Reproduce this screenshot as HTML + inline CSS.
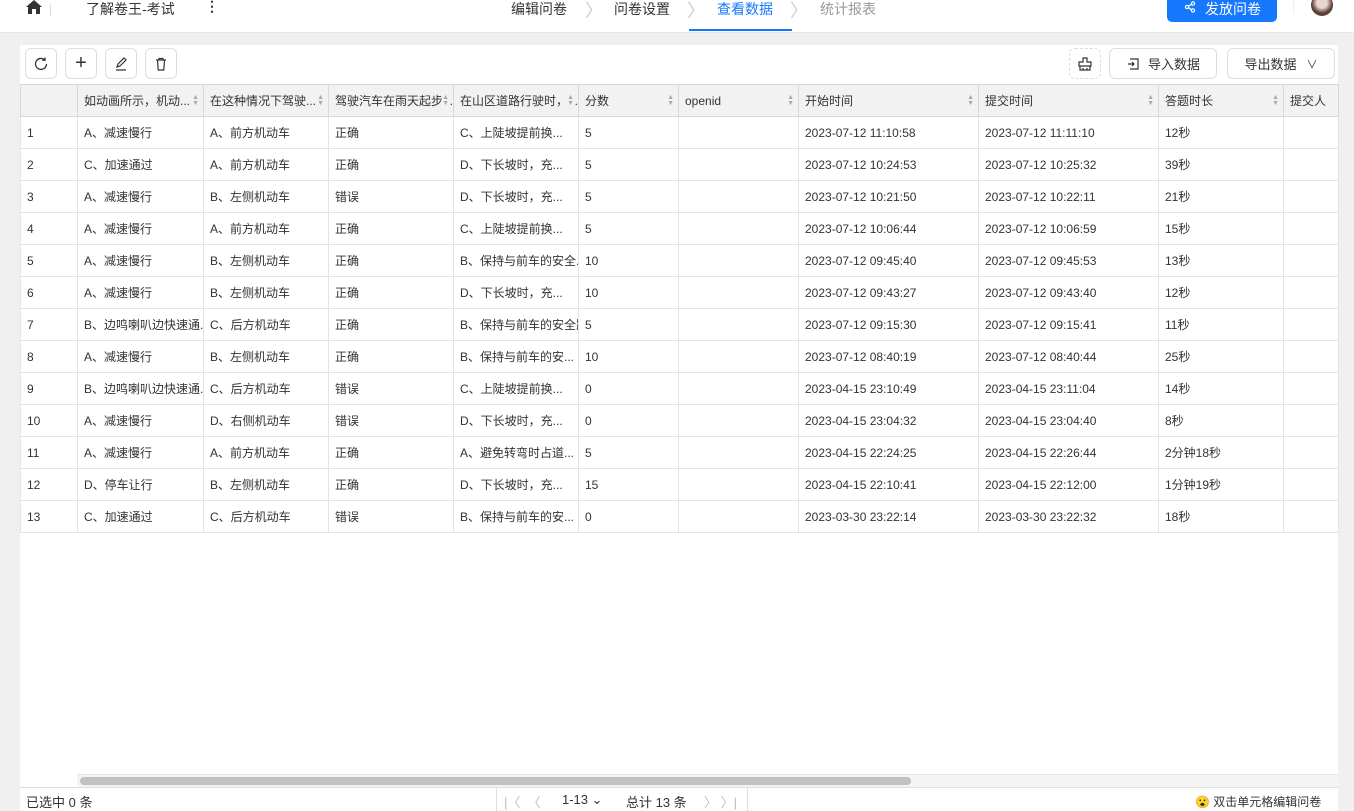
<!DOCTYPE html><html><head><meta charset="utf-8"><style>
*{box-sizing:border-box;margin:0;padding:0}
body{width:1354px;height:811px;overflow:hidden;background:#f0f0f0;font-family:"Liberation Sans","Noto Sans CJK SC",sans-serif;position:relative;color:#333}
.top{position:absolute;left:0;top:0;width:1354px;height:32px;background:#fff;font-size:14px}
.a{position:absolute}
.card{position:absolute;left:20px;top:45px;width:1318px;height:766px;background:#fff}
.btn{position:absolute;top:3px;height:31px;border:1px solid #ddd;border-radius:6px;background:#fff;font-size:13px;display:flex;align-items:center;justify-content:center;color:#333}
table{position:absolute;left:0;top:39px;width:1318px;border-collapse:collapse;font-size:12px;table-layout:fixed}
td,th{height:32px;border:1px solid #e4e4e4;padding:0 6px;white-space:nowrap;overflow:hidden;text-align:left;font-weight:normal;color:#333}
th{background:#f2f2f2;border-color:#d8d8d8;position:relative;padding-right:4px}
th .s{position:absolute;right:4px;top:10px;font-size:7px;color:#aaa;line-height:6px;background:#f2f2f2}
</style></head><body>
<div class="top">
<svg class="a" style="left:26px;top:0" width="16" height="14" viewBox="0 0 16 14"><path d="M8 0L0 7h2v7h4V9h4v5h4V7h2z" fill="#333"/></svg>
<div class="a" style="left:50px;top:4px;width:1px;height:12px;background:#ddd"></div>
<div class="a" style="left:86px;top:-1px">了解卷王-考试</div>
<div class="a" style="left:205px;top:-2px;font-weight:bold">⋮</div>
<div class="a" style="left:511px;top:-1px">编辑问卷</div>
<div class="a" style="left:585px;top:-3px;color:#ccc;font-size:18px">〉</div>
<div class="a" style="left:614px;top:-1px">问卷设置</div>
<div class="a" style="left:687px;top:-3px;color:#ccc;font-size:18px">〉</div>
<div class="a" style="left:717px;top:-1px;color:#1677ff">查看数据</div>
<div class="a" style="left:689px;top:29px;width:103px;height:2px;background:#1677ff"></div>
<div class="a" style="left:790px;top:-3px;color:#ccc;font-size:18px">〉</div>
<div class="a" style="left:820px;top:-1px;color:#999">统计报表</div>
<div class="a" style="left:1167px;top:-4px;width:110px;height:26px;background:#1677ff;border-radius:5px"></div>
<div class="a" style="left:1205px;top:-1px;color:#fff;font-size:14px;white-space:nowrap">发放问卷</div>
<svg class="a" style="left:1184px;top:1px" width="12" height="12" viewBox="0 0 12 12" fill="none" stroke="#fff" stroke-width="1.2"><circle cx="3" cy="6" r="1.6"/><circle cx="9" cy="2.5" r="1.6"/><circle cx="9" cy="9.5" r="1.6"/><path d="M4.4 5.2L7.6 3.3M4.4 6.8L7.6 8.7"/></svg>
<div class="a" style="left:1293px;top:0;width:1px;height:14px;background:#eee"></div>
<div class="a" style="left:1311px;top:-6px;width:22px;height:22px;border-radius:50%;background:radial-gradient(circle at 50% 40%,#e9d6cc 30%,#5a4038 60%)"></div>
</div>
<div class="a" style="left:0;top:32px;width:1354px;height:1px;background:#e6e6e6"></div>
<div class="card">
<div class="btn" style="left:5px;width:32px"><svg width="16" height="16" viewBox="0 0 16 16" fill="none" stroke="#333" stroke-width="1.3"><path d="M13.5 8A5.5 5.5 0 1 1 11.5 3.7M12 1.5v2.7H9.3"/></svg></div>
<div class="btn" style="left:45px;width:32px;font-size:20px;font-weight:300">+</div>
<div class="btn" style="left:85px;width:32px"><svg width="16" height="16" viewBox="0 0 16 16" fill="none" stroke="#333" stroke-width="1.2"><path d="M4 11l1-3 6-6 2 2-6 6zM3 14h10"/></svg></div>
<div class="btn" style="left:125px;width:32px"><svg width="16" height="16" viewBox="0 0 16 16" fill="none" stroke="#333" stroke-width="1.2"><path d="M3 4h10M6 4V2.5h4V4M4.5 4l.7 10h5.6l.7-10"/></svg></div>
<div class="btn" style="left:1049px;width:32px;border-style:dashed"><svg width="16" height="16" viewBox="0 0 16 16" fill="none" stroke="#333" stroke-width="1.2"><path d="M6 2h4v4h4v4H2V6h4zM3 10v4h10v-4M6 12v2M10 12v2"/></svg></div>
<div class="btn" style="left:1089px;width:108px"><svg width="14" height="14" viewBox="0 0 14 14" fill="none" stroke="#333" stroke-width="1.2" style="margin-right:8px"><path d="M4 2h8v10H4M2 7h6M6 5l2 2-2 2"/></svg>导入数据</div>
<div class="btn" style="left:1207px;width:108px">导出数据 <span style="margin-left:10px;font-size:11px">∨</span></div>
<table>
<colgroup><col style="width:57px"><col style="width:126px"><col style="width:125px"><col style="width:125px"><col style="width:125px"><col style="width:100px"><col style="width:120px"><col style="width:180px"><col style="width:180px"><col style="width:125px"><col style="width:55px"></colgroup>
<tr><th></th><th>如动画所示，机动...<span class="s">▲<br>▼</span></th><th>在这种情况下驾驶...<span class="s">▲<br>▼</span></th><th>驾驶汽车在雨天起步...<span class="s">▲<br>▼</span></th><th>在山区道路行驶时，...<span class="s">▲<br>▼</span></th><th>分数<span class="s">▲<br>▼</span></th><th>openid<span class="s">▲<br>▼</span></th><th>开始时间<span class="s">▲<br>▼</span></th><th>提交时间<span class="s">▲<br>▼</span></th><th>答题时长<span class="s">▲<br>▼</span></th><th>提交人</th></tr>
<tr><td>1</td><td>A、减速慢行</td><td>A、前方机动车</td><td>正确</td><td>C、上陡坡提前换...</td><td>5</td><td></td><td>2023-07-12 11:10:58</td><td>2023-07-12 11:11:10</td><td>12秒</td><td></td></tr>
<tr><td>2</td><td>C、加速通过</td><td>A、前方机动车</td><td>正确</td><td>D、下长坡时，充...</td><td>5</td><td></td><td>2023-07-12 10:24:53</td><td>2023-07-12 10:25:32</td><td>39秒</td><td></td></tr>
<tr><td>3</td><td>A、减速慢行</td><td>B、左侧机动车</td><td>错误</td><td>D、下长坡时，充...</td><td>5</td><td></td><td>2023-07-12 10:21:50</td><td>2023-07-12 10:22:11</td><td>21秒</td><td></td></tr>
<tr><td>4</td><td>A、减速慢行</td><td>A、前方机动车</td><td>正确</td><td>C、上陡坡提前换...</td><td>5</td><td></td><td>2023-07-12 10:06:44</td><td>2023-07-12 10:06:59</td><td>15秒</td><td></td></tr>
<tr><td>5</td><td>A、减速慢行</td><td>B、左侧机动车</td><td>正确</td><td>B、保持与前车的安全...</td><td>10</td><td></td><td>2023-07-12 09:45:40</td><td>2023-07-12 09:45:53</td><td>13秒</td><td></td></tr>
<tr><td>6</td><td>A、减速慢行</td><td>B、左侧机动车</td><td>正确</td><td>D、下长坡时，充...</td><td>10</td><td></td><td>2023-07-12 09:43:27</td><td>2023-07-12 09:43:40</td><td>12秒</td><td></td></tr>
<tr><td>7</td><td>B、边鸣喇叭边快速通...</td><td>C、后方机动车</td><td>正确</td><td>B、保持与前车的安全距</td><td>5</td><td></td><td>2023-07-12 09:15:30</td><td>2023-07-12 09:15:41</td><td>11秒</td><td></td></tr>
<tr><td>8</td><td>A、减速慢行</td><td>B、左侧机动车</td><td>正确</td><td>B、保持与前车的安...</td><td>10</td><td></td><td>2023-07-12 08:40:19</td><td>2023-07-12 08:40:44</td><td>25秒</td><td></td></tr>
<tr><td>9</td><td>B、边鸣喇叭边快速通...</td><td>C、后方机动车</td><td>错误</td><td>C、上陡坡提前换...</td><td>0</td><td></td><td>2023-04-15 23:10:49</td><td>2023-04-15 23:11:04</td><td>14秒</td><td></td></tr>
<tr><td>10</td><td>A、减速慢行</td><td>D、右侧机动车</td><td>错误</td><td>D、下长坡时，充...</td><td>0</td><td></td><td>2023-04-15 23:04:32</td><td>2023-04-15 23:04:40</td><td>8秒</td><td></td></tr>
<tr><td>11</td><td>A、减速慢行</td><td>A、前方机动车</td><td>正确</td><td>A、避免转弯时占道...</td><td>5</td><td></td><td>2023-04-15 22:24:25</td><td>2023-04-15 22:26:44</td><td>2分钟18秒</td><td></td></tr>
<tr><td>12</td><td>D、停车让行</td><td>B、左侧机动车</td><td>正确</td><td>D、下长坡时，充...</td><td>15</td><td></td><td>2023-04-15 22:10:41</td><td>2023-04-15 22:12:00</td><td>1分钟19秒</td><td></td></tr>
<tr><td>13</td><td>C、加速通过</td><td>C、后方机动车</td><td>错误</td><td>B、保持与前车的安...</td><td>0</td><td></td><td>2023-03-30 23:22:14</td><td>2023-03-30 23:22:32</td><td>18秒</td><td></td></tr>
</table>
<div class="a" style="left:57px;top:729px;width:1261px;height:13px;background:#f4f4f4;border-top:1px solid #e6e6e6"></div>
<div class="a" style="left:60px;top:732px;width:831px;height:8px;background:#c1c1c1;border-radius:4px"></div>
<div class="a" style="left:0;top:742px;width:1318px;height:1px;background:#e0e0e0"></div>
<div class="a" style="left:6px;top:747px;font-size:13px">已选中 0 条</div>
<div class="a" style="left:476px;top:743px;width:1px;height:23px;background:#e0e0e0"></div>
<div class="a" style="left:727px;top:743px;width:1px;height:23px;background:#e0e0e0"></div>
<div class="a" style="left:484px;top:747px;font-size:13px;color:#bbb">|〈 &nbsp;〈</div>
<div class="a" style="left:542px;top:747px;font-size:13px">1-13 ⌄</div>
<div class="a" style="left:606px;top:747px;font-size:13px">总计 13 条</div>
<div class="a" style="left:684px;top:747px;font-size:13px;color:#bbb">〉 〉|</div>
<div class="a" style="left:1175px;top:748px;font-size:12px">😮 双击单元格编辑问卷</div>
</div>
</body></html>
